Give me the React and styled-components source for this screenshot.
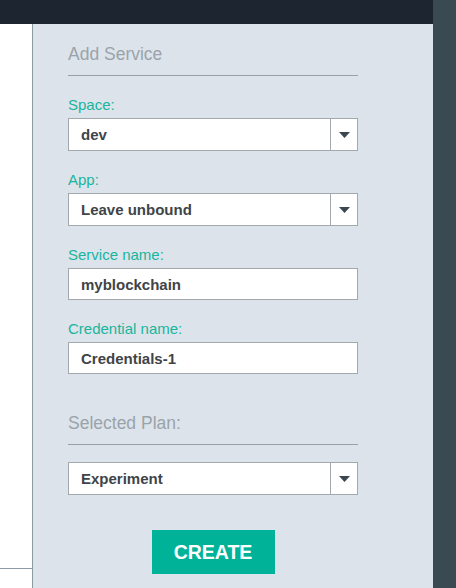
import React from 'react'
import styled, { createGlobalStyle } from 'styled-components'

const GlobalStyle = createGlobalStyle`
	html, body {
		margin: 0;
		padding: 0;
		height: 100%;
	}
	body {
		font-family: "Liberation Sans", Arial, sans-serif;
		background: #dde3ea;
	}
	#root {
		height: 100%;
	}
`

const fields = [
	{ label: 'Space:', value: 'dev', kind: 'select' },
	{ label: 'App:', value: 'Leave unbound', kind: 'select' },
	{ label: 'Service name:', value: 'myblockchain', kind: 'input' },
	{ label: 'Credential name:', value: 'Credentials-1', kind: 'input' }
]

const Arrow = () => (
	<svg width="11" height="6" viewBox="0 0 11 6">
		<path d="M0 0 H11 L5.5 6 Z" fill="#3b4750" />
	</svg>
)

const Select = ({ value }) => (
	<SelectBox>
		<SelectText>{value}</SelectText>
		<ArrowCell><Arrow /></ArrowCell>
	</SelectBox>
)

export default function App() {
	return (
		<Page>
			<GlobalStyle />
			<Main>
				<TopBar />
				<Body>
					<LeftPane>
						<LeftRow />
					</LeftPane>
					<Panel>
						<Form>
							<SectionTitle>Add Service</SectionTitle>
							{fields.map(f => (
								<Field key={f.label}>
									<Label>{f.label}</Label>
									{f.kind === 'select'
										? <Select value={f.value} />
										: <TextInput>{f.value}</TextInput>}
								</Field>
							))}
							<SectionTitle spaced>Selected Plan:</SectionTitle>
							<PlanRow>
								<Select value="Experiment" />
							</PlanRow>
							<ButtonRow>
								<CreateButton>CREATE</CreateButton>
							</ButtonRow>
						</Form>
					</Panel>
				</Body>
			</Main>
			<RightRail />
		</Page>
	)
}

const Page = styled.div`
	display: flex;
	height: 588px;
	overflow: hidden;
`

const Main = styled.div`
	flex: 1;
	display: flex;
	flex-direction: column;
`

const TopBar = styled.div`
	height: 24px;
	background: #1d2630;
`

const Body = styled.div`
	flex: 1;
	display: flex;
`

const LeftPane = styled.div`
	width: 32px;
	background: #ffffff;
	border-right: 1px solid #8e9aa3;
`

const LeftRow = styled.div`
	height: 544px;
	border-bottom: 1px solid #8e9aa3;
`

const Panel = styled.div`
	flex: 1;
	background: #dde3ea;
	padding: 20px 0 0 35px;
`

const Form = styled.div`
	width: 290px;
	display: flex;
	flex-direction: column;
`

const SectionTitle = styled.div`
	font-size: 17.5px;
	line-height: 20px;
	color: #9aa3aa;
	padding-bottom: 11px;
	border-bottom: 1px solid #9aa0a6;
	margin-top: ${p => (p.spaced ? '39px' : '0')};
`

const Field = styled.div`
	display: flex;
	flex-direction: column;
	gap: 5px;
	margin-top: 20px;
`

const Label = styled.div`
	font-size: 15px;
	line-height: 17px;
	color: #19b59e;
`

const SelectBox = styled.div`
	display: flex;
	height: 33px;
	box-sizing: border-box;
	background: #ffffff;
	border: 1px solid #a3a8ac;
`

const SelectText = styled.div`
	flex: 1;
	display: flex;
	align-items: center;
	padding-left: 12px;
	font-size: 15px;
	font-weight: bold;
	color: #3f4448;
`

const ArrowCell = styled.div`
	width: 26px;
	display: flex;
	align-items: center;
	justify-content: center;
	border-left: 1px solid #a3a8ac;
	padding-top: 1px;
`

const TextInput = styled.div`
	height: 32px;
	box-sizing: border-box;
	display: flex;
	align-items: center;
	padding-left: 12px;
	background: #ffffff;
	border: 1px solid #a3a8ac;
	font-size: 15px;
	font-weight: bold;
	color: #3f4448;
`

const PlanRow = styled.div`
	margin-top: 17px;
`

const ButtonRow = styled.div`
	display: flex;
	justify-content: center;
	margin-top: 35px;
`

const CreateButton = styled.button`
	width: 123px;
	height: 44px;
	border: none;
	background: #00b398;
	color: #ffffff;
	font-family: "Liberation Sans", Arial, sans-serif;
	font-size: 19.5px;
	font-weight: bold;
	cursor: pointer;
`

const RightRail = styled.div`
	width: 23px;
	background: #394a53;
`
